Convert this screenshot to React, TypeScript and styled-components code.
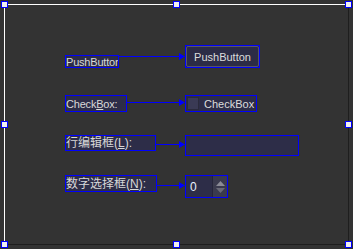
import React from "react";
import styled, { createGlobalStyle } from "styled-components";

const Global = createGlobalStyle`
  html, body {
    margin: 0;
    padding: 0;
    background: #333333;
  }
  body {
    font-family: "Liberation Sans", "Noto Sans CJK SC", sans-serif;
  }
`;

const BLUE = "#0000ff";

const Canvas = styled.div`
  position: relative;
  width: 353px;
  height: 249px;
  background: #333333;
  overflow: hidden;
`;

// the designer form, with its sunken edge
const Frame = styled.div`
  margin: 4px 0 0 4px;
  width: 343px;
  height: 239px;
  border-top: 1px solid #ffffff;
  border-left: 1px solid #ffffff;
  border-right: 1px solid #1e1e1e;
  border-bottom: 1px solid #1e1e1e;
`;

const Form = styled.div`
  display: grid;
  grid-template-rows: 50px 40px 40px auto;
  padding: 40px 0 0 60px;
`;

const Row = styled.div`
  align-self: start;
  display: flex;
  align-items: flex-start;
`;

const LeftCell = styled.div<{ $h: number }>`
  width: 120px;
  height: ${(p) => p.$h}px;
  display: flex;
  align-items: center;
`;

// selection handles lie over the form edge
const Handle = styled.div<{ $x: number; $y: number }>`
  position: absolute;
  left: ${(p) => p.$x - 3}px;
  top: ${(p) => p.$y - 3}px;
  width: 5px;
  height: 5px;
  border: 1px solid ${BLUE};
  background: #f0f0f0;
`;

const Widget = styled.div<{ $w: number; $h: number; $align?: string }>`
  width: ${(p) => p.$w - 2}px;
  height: ${(p) => p.$h - 2}px;
  flex: none;
  align-self: ${(p) => p.$align ?? "auto"};
  border: 1px solid ${BLUE};
  background: #2d2d48;
  overflow: hidden;
  display: flex;
  align-items: center;
`;

const LabelText = styled.span<{ $size?: number }>`
  color: #d8d8d8;
  font-size: ${(p) => p.$size ?? 11}px;
  line-height: 12px;
  white-space: nowrap;
  letter-spacing: ${(p) => (p.$size ? 0 : -0.2)}px;
  u {
    text-decoration: underline;
    text-underline-offset: 1px;
  }
`;

const Connector = styled.div`
  flex: 1;
  min-width: 0;
  height: 7px;
  display: flex;
  align-items: center;
`;

const Wire = styled.div`
  flex: 1;
  min-width: 0;
  height: 0;
  border-top: 1px solid ${BLUE};
`;

const Head = styled.svg`
  display: block;
  flex: none;
`;

const Button = styled.div`
  flex: 1;
  align-self: stretch;
  border: 1px solid #55556a;
  border-radius: 2px;
  background: #2c2c46;
  color: #dcdcdc;
  font-size: 11px;
  display: flex;
  align-items: center;
  justify-content: center;
`;

const CheckRow = styled.div`
  display: flex;
  align-items: center;
  gap: 5px;
  padding-left: 1px;
  color: #dcdcdc;
  font-size: 11px;
`;

const Indicator = styled.div`
  width: 10px;
  height: 11px;
  border: 1px solid #2a2a3c;
  background: #3a3a55;
`;

const SpinValue = styled.div`
  flex: 1;
  padding-left: 4px;
  color: #e8f0ff;
  font-size: 12px;
`;

const SpinButtons = styled.div`
  width: 14px;
  align-self: stretch;
  background: #3a3a4e;
  border-left: 1px solid #25253a;
  display: flex;
  flex-direction: column;
  align-items: center;
  justify-content: center;
  gap: 2px;
`;

const Arrow = () => (
  <Connector>
    <Wire />
    <Head width="6" height="7" viewBox="0 0 6 7">
      <path d="M0 0 L6 3.5 L0 7 Z" fill={BLUE} />
    </Head>
  </Connector>
);

const handles = [
  [4, 4],
  [176, 4],
  [348, 4],
  [4, 124],
  [348, 124],
  [4, 244],
  [176, 244],
  [348, 244],
];

export default function App() {
  return (
    <Canvas>
      <Global />
      <Frame>
        <Form>
          <Row>
            <LeftCell $h={23}>
              <Widget $w={54} $h={13} $align="flex-end">
                <LabelText>PushButton</LabelText>
              </Widget>
              <Arrow />
            </LeftCell>
            <Widget $w={75} $h={23}>
              <Button>PushButton</Button>
            </Widget>
          </Row>

          <Row>
            <LeftCell $h={15}>
              <Widget $w={62} $h={17} $align="flex-start">
                <LabelText>
                  Check<u>B</u>ox:
                </LabelText>
              </Widget>
              <Arrow />
            </LeftCell>
            <Widget $w={72} $h={17}>
              <CheckRow>
                <Indicator />
                <span>CheckBox</span>
              </CheckRow>
            </Widget>
          </Row>

          <Row>
            <LeftCell $h={19}>
              <Widget $w={91} $h={16} $align="flex-start">
                <LabelText $size={12}>
                  行编辑框(<u>L</u>):
                </LabelText>
              </Widget>
              <Arrow />
            </LeftCell>
            <Widget $w={114} $h={21} />
          </Row>

          <Row>
            <LeftCell $h={21}>
              <Widget $w={92} $h={17} $align="flex-start">
                <LabelText $size={12}>
                  数字选择框(<u>N</u>):
                </LabelText>
              </Widget>
              <Arrow />
            </LeftCell>
            <Widget $w={43} $h={23}>
              <SpinValue>0</SpinValue>
              <SpinButtons>
                <svg width="9" height="5" viewBox="0 0 9 5">
                  <path d="M0 5 L4.5 0 L9 5 Z" fill="#8a8a96" />
                </svg>
                <svg width="9" height="5" viewBox="0 0 9 5">
                  <path d="M0 0 L4.5 5 L9 0 Z" fill="#6a6a78" />
                </svg>
              </SpinButtons>
            </Widget>
          </Row>
        </Form>
      </Frame>

      {handles.map(([x, y], i) => (
        <Handle key={i} $x={x} $y={y} />
      ))}
    </Canvas>
  );
}
